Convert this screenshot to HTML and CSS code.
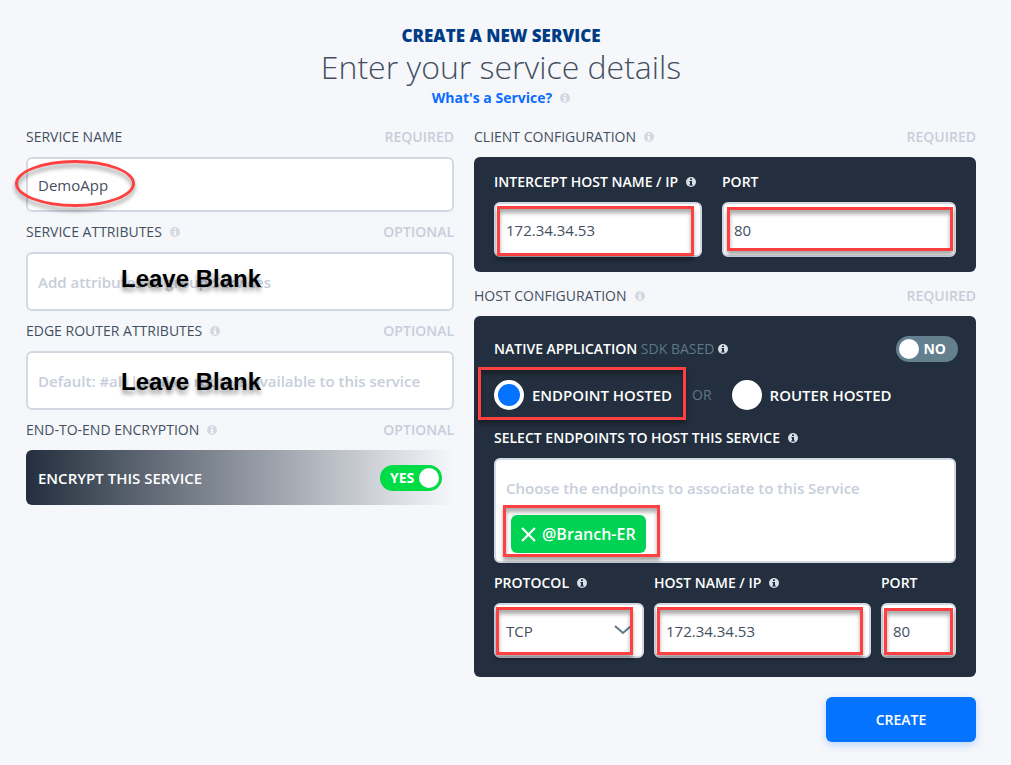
FILE: index.html
```html
<!DOCTYPE html>
<html lang="en">
<head>
<meta charset="utf-8">
<meta name="viewport" content="width=device-width, initial-scale=1">
<title>Create a New Service</title>
<link rel="stylesheet" href="styles.css">
</head>
<body>
<svg class="defs" aria-hidden="true">
  <symbol id="info" viewBox="0 0 10 10">
    <circle cx="5" cy="5" r="5" fill="currentColor"/>
    <path class="info-mark" d="M4 1.5h2v1.5H4zM3.4 4H6v3.4h.8v1.1H3.2V7.4H4V5h-.6z"/>
  </symbol>
</svg>
<form class="page">
  <header class="head">
    <h2 class="eyebrow">CREATE A NEW SERVICE</h2>
    <h1 class="title">Enter your service details</h1>
    <p class="help"><a href="#service">What's a Service?</a><svg class="info"><use href="#info"/></svg></p>
  </header>

  <main class="columns">
    <section class="column">
      <div class="row"><label for="name">SERVICE NAME</label><span class="hint">REQUIRED</span></div>
      <div class="field">
        <input class="control" id="name" type="text" value="DemoApp">
        <span class="oval"></span>
      </div>

      <div class="row"><label for="attrs">SERVICE ATTRIBUTES</label><svg class="info"><use href="#info"/></svg><span class="hint">OPTIONAL</span></div>
      <div class="field">
        <input class="control tall" id="attrs" type="text" placeholder="Add attributes to group Services">
        <span class="note note-upper">Leave Blank</span>
      </div>

      <div class="row"><label for="edge">EDGE ROUTER ATTRIBUTES</label><svg class="info"><use href="#info"/></svg><span class="hint">OPTIONAL</span></div>
      <div class="field">
        <input class="control tall" id="edge" type="text" placeholder="Default: #all | makes routers available to this service">
        <span class="note note-lower">Leave Blank</span>
      </div>

      <div class="row"><span>END-TO-END ENCRYPTION</span><svg class="info"><use href="#info"/></svg><span class="hint">OPTIONAL</span></div>
      <div class="encrypt">
        <span>ENCRYPT THIS SERVICE</span>
        <button class="toggle on" type="button" role="switch" aria-checked="true">YES<i class="knob"></i></button>
      </div>
    </section>

    <section class="column">
      <div class="row"><span>CLIENT CONFIGURATION</span><svg class="info"><use href="#info"/></svg><span class="hint">REQUIRED</span></div>
      <div class="panel client">
        <div class="client-grid">
          <div>
            <div class="row"><label for="intercept">INTERCEPT HOST NAME / IP</label><svg class="info"><use href="#info"/></svg></div>
            <div class="field"><input class="control" id="intercept" type="text" value="172.34.34.53"><span class="mark mark-intercept"></span></div>
          </div>
          <div>
            <div class="row"><label for="port">PORT</label></div>
            <div class="field"><input class="control" id="port" type="text" value="80"><span class="mark mark-port"></span></div>
          </div>
        </div>
      </div>

      <div class="row"><span>HOST CONFIGURATION</span><svg class="info"><use href="#info"/></svg><span class="hint">REQUIRED</span></div>
      <div class="panel host">
        <div class="native">
          <span>NATIVE APPLICATION <span class="muted">SDK BASED</span></span><svg class="info"><use href="#info"/></svg>
          <button class="toggle off" type="button" role="switch" aria-checked="false"><i class="knob"></i>NO</button>
        </div>
        <div class="choices">
          <label class="choice"><input type="radio" name="hosted" checked>ENDPOINT HOSTED<span class="mark mark-choice"></span></label>
          <span class="muted">OR</span>
          <label class="choice"><input type="radio" name="hosted">ROUTER HOSTED</label>
        </div>
        <div class="row"><label for="endpoints">SELECT ENDPOINTS TO HOST THIS SERVICE</label><svg class="info"><use href="#info"/></svg></div>
        <div class="picker">
          <input id="endpoints" type="text" placeholder="Choose the endpoints to associate to this Service">
          <button class="chip" type="button"><svg class="cross" viewBox="0 0 14 14"><path d="M1 1l12 12M13 1L1 13"/></svg>@Branch-ER<span class="mark mark-chip"></span></button>
        </div>
        <div class="host-grid">
          <div>
            <div class="row"><label for="protocol">PROTOCOL</label><svg class="info"><use href="#info"/></svg></div>
            <div class="field">
              <select class="control" id="protocol"><option>TCP</option><option>UDP</option></select>
              <svg class="chevron" viewBox="0 0 18 10"><path d="M1 1l8 7 8-7"/></svg>
              <span class="mark mark-protocol"></span>
            </div>
          </div>
          <div>
            <div class="row"><label for="hostname">HOST NAME / IP</label><svg class="info"><use href="#info"/></svg></div>
            <div class="field"><input class="control" id="hostname" type="text" value="172.34.34.53"><span class="mark mark-host"></span></div>
          </div>
          <div>
            <div class="row"><label for="hostport">PORT</label></div>
            <div class="field"><input class="control" id="hostport" type="text" value="80"><span class="mark mark-hostport"></span></div>
          </div>
        </div>
      </div>
      <button class="create" type="submit">CREATE</button>
    </section>
  </main>
</form>
</body>
</html>
```

FILE: styles.css
```css
* { box-sizing: border-box; }

body {
  --info-mark: #f6f7fb;
  margin: 0;
  background: #f6f7fb;
  color: #434f60;
  font: 14px/20px "Open Sans", sans-serif;
}

input, select, button { font: inherit; }

.defs { position: absolute; width: 0; height: 0; }

.page { padding: 24px 35px 23px 26px; }

.head { text-align: center; }
.eyebrow {
  margin: 0;
  color: #003c85;
  font-size: 17px;
  font-weight: 800;
  line-height: 24px;
}
.title {
  margin: 0;
  font-size: 32px;
  font-weight: 300;
  line-height: 38px;
}
.help {
  display: flex;
  justify-content: center;
  align-items: center;
  gap: 8px;
  margin: 0;
  padding: 2px 0 9px;
}
.help a { color: #0a6cff; font-weight: 700; text-decoration: none; }

.info { flex: none; width: 10px; height: 10px; color: #d3d8e2; }
.info-mark { fill: var(--info-mark); }
.panel .info { color: #d8dee8; }

.columns {
  display: grid;
  grid-template-columns: 428fr 502fr;
  gap: 20px;
}
.column { display: flex; flex-direction: column; }

.row { display: flex; align-items: center; gap: 8px; height: 40px; white-space: nowrap; }
.hint { margin-left: auto; color: #c7ceda; font-weight: 600; }

.field { position: relative; }
.control {
  display: block;
  width: 100%;
  height: 55px;
  padding: 0 10px;
  border: 2px solid #d3d8e3;
  border-radius: 6px;
  background: #fff;
  color: #434f60;
  font-size: 15px;
}
.tall { height: 59px; }
select.control { appearance: none; }
::placeholder { color: #c7ceda; font-weight: 600; opacity: 1; }

.encrypt {
  display: flex;
  align-items: center;
  justify-content: space-between;
  height: 55px;
  padding: 0 12px;
  border-radius: 6px;
  background: linear-gradient(90deg, #232f3e, #f6f7fb);
  color: #fff;
  font-size: 15px;
  font-weight: 600;
}

.toggle {
  display: flex;
  align-items: center;
  justify-content: space-between;
  width: 62px;
  height: 26px;
  border: 0;
  border-radius: 13px;
  color: #fff;
  font-size: 14px;
  font-weight: 700;
}
.knob { width: 20px; height: 20px; border-radius: 50%; background: #fff; }
.on { padding: 0 3px 0 10px; background: #00dc46; }
.off { margin: 0 -2px 0 auto; padding: 0 12px 0 3px; background: #64808f; }

.panel {
  --info-mark: #232f3e;
  border-radius: 6px;
  background: #232f3e;
  color: #fff;
  font-weight: 600;
}
.client { margin-bottom: 4px; padding: 5px 20px 15px; }
.client-grid { display: grid; grid-template-columns: 208fr 234fr; gap: 20px; }
.host { padding: 20px 20px 19px; }
.host-grid { display: grid; grid-template-columns: 150fr 217fr 75fr; gap: 10px; }
.panel .control { font-weight: 400; }

.native { display: flex; align-items: center; gap: 4px; height: 26px; }
.muted { color: #5d7888; font-weight: 400; }

.choices { display: flex; align-items: center; gap: 20px; padding: 18px 0 8px; }
.choice { display: flex; align-items: center; gap: 8px; position: relative; font-size: 15px; }
.choice input {
  appearance: none;
  width: 30px;
  height: 30px;
  margin: 0;
  border: 4px solid #fff;
  border-radius: 50%;
  background: #fff;
}
.choice input:checked { background: #0473ff; }

.picker {
  display: flex;
  flex-direction: column;
  align-items: flex-start;
  padding: 18px 10px 8px;
  border: 2px solid #d3d8e3;
  border-radius: 6px;
  background: #fff;
}
.picker input {
  width: 100%;
  height: 20px;
  margin-bottom: 17px;
  padding: 0;
  border: 0;
  background: none;
  font-size: 15px;
}
.chip {
  display: flex;
  align-items: center;
  gap: 6px;
  position: relative;
  height: 38px;
  margin-left: 5px;
  padding: 0 10px;
  border: 0;
  border-radius: 6px;
  background: #00d354;
  color: #fff;
  font-size: 16px;
  font-weight: 600;
}
.cross { width: 15px; height: 15px; fill: none; stroke: #fff; stroke-width: 2; }
.chevron {
  position: absolute;
  top: 22px;
  right: 12px;
  width: 18px;
  height: 10px;
  fill: none;
  stroke: #5d7888;
  stroke-width: 2;
  pointer-events: none;
}

.create {
  align-self: flex-end;
  width: 150px;
  height: 45px;
  margin-top: 20px;
  border: 0;
  border-radius: 6px;
  background: #0473ff;
  box-shadow: 0 3px 8px #0473ff40;
  color: #fff;
  font-weight: 600;
}

/* Annotations drawn over the form */
.mark {
  position: absolute;
  border: 3px solid #ff4040;
  box-shadow: 0 4px 4px #0005, inset 0 4px 4px #0005;
  pointer-events: none;
}
.mark-intercept { inset: 4px 8px 1px 3px; }
.mark-port { inset: 5px 3px 6px 5px; }
.mark-choice { inset: -13px -14px -10px -16px; }
.mark-chip { inset: -10px -14px -4px -8px; }
.mark-protocol { inset: 4px 11px 3px 2px; }
.mark-host { inset: 4px 8px 3px 3px; }
.mark-hostport { inset: 5px 3px 3px; }
.oval {
  position: absolute;
  top: 3px;
  left: -11px;
  width: 120px;
  height: 47px;
  border: 3px solid #ff4040;
  border-radius: 50%;
  filter: drop-shadow(0 4px 2px #0006);
  pointer-events: none;
}
.note {
  position: absolute;
  left: 95px;
  color: #000;
  font: bold 24px/28px "Liberation Sans", Arial, sans-serif;
  text-shadow: 0 4px 4px #0006;
  pointer-events: none;
}
.note-upper { top: 13px; }
.note-lower { top: 17px; }
```
